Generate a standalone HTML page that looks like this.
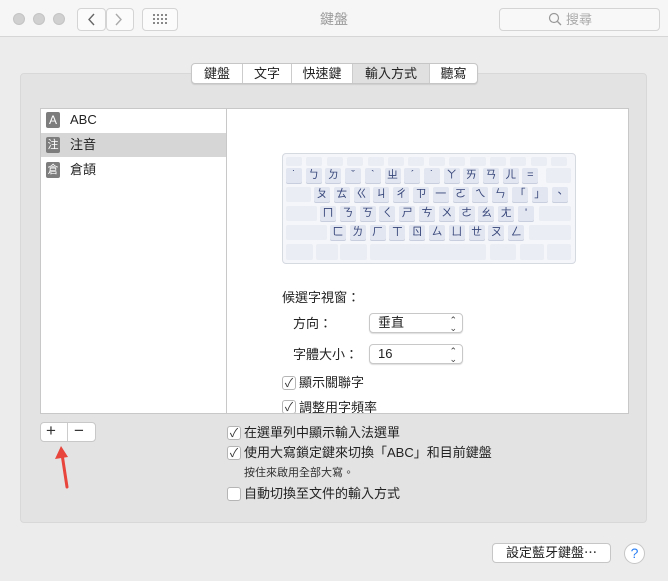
<!DOCTYPE html>
<html><head><meta charset="utf-8"><style>
*{margin:0;padding:0;box-sizing:border-box}
body{width:668px;height:581px;background:#ececec;font-family:"Liberation Sans","Noto Sans CJK TC",sans-serif;font-size:13px;line-height:16px;color:#222;position:relative;overflow:hidden}
.a{position:absolute}
.tb{left:0;top:0;width:668px;height:37px;background:#f6f6f6;border-bottom:1px solid #d6d6d6}
.dot{width:12px;height:12px;border-radius:50%;background:#d0d0d0;border:1px solid #c4c4c4;top:13px}
.btn{background:#fbfbfb;border:1px solid #d4d4d4;border-radius:4px}
.k{position:absolute;height:15px;background:#e2e6f0;border-radius:2px;box-shadow:0 1px 0 #c9cede;color:#36457a;font-size:11px;text-align:center;line-height:15px}
.b{position:absolute;height:15px;background:#eaedf3;border-radius:2px}
.cb{width:14px;height:14px;background:#fff;border:1px solid #b5b5b5;border-radius:3px;font-size:12px;line-height:12px;text-align:center;color:#333}
.pop{background:#fff;border:1px solid #c8c8c8;border-radius:4px;height:20px;width:94px;font-size:13px;line-height:18px;padding-left:8px;box-shadow:0 1px 1px #ddd}
.pop span{position:absolute;right:5px;font-size:9px;line-height:8px;top:2px;color:#444}
</style></head><body>
<div class="a tb"></div>
<div class="a dot" style="left:13px"></div><div class="a dot" style="left:33px"></div><div class="a dot" style="left:53px"></div>
<div class="a btn" style="left:77px;top:8px;width:29px;height:23px"></div>
<div class="a btn" style="left:106px;top:8px;width:28px;height:23px"></div>
<svg class="a" style="left:77px;top:8px" width="57" height="23"><path d="M17 6l-5 5.5 5 5.5" stroke="#666" stroke-width="1.4" fill="none"/><path d="M39 6l5 5.5-5 5.5" stroke="#aaa" stroke-width="1.4" fill="none"/></svg>
<div class="a btn" style="left:142px;top:8px;width:36px;height:23px"></div>
<svg class="a" style="left:153px;top:14px" width="15" height="11"><g fill="#888"><rect x="0" y="0" width="2" height="2"/><rect x="4" y="0" width="2" height="2"/><rect x="8" y="0" width="2" height="2"/><rect x="12" y="0" width="2" height="2"/><rect x="0" y="4" width="2" height="2"/><rect x="4" y="4" width="2" height="2"/><rect x="8" y="4" width="2" height="2"/><rect x="12" y="4" width="2" height="2"/><rect x="0" y="8" width="2" height="2"/><rect x="4" y="8" width="2" height="2"/><rect x="8" y="8" width="2" height="2"/><rect x="12" y="8" width="2" height="2"/></g></svg>
<div class="a" style="left:300px;top:11px;width:68px;text-align:center;color:#9a9a9a;font-size:14px">鍵盤</div>
<div class="a btn" style="left:499px;top:8px;width:161px;height:23px;background:#f8f8f8"></div>
<svg class="a" style="left:548px;top:12px" width="14" height="14"><circle cx="6" cy="6" r="4.5" stroke="#999" stroke-width="1.2" fill="none"/><path d="M9.5 9.5l3.5 3.5" stroke="#999" stroke-width="1.3"/></svg>
<div class="a" style="left:566px;top:12px;color:#aaa;font-size:13px">搜尋</div>

<div class="a" style="left:20px;top:73px;width:627px;height:450px;background:#e3e3e3;border:1px solid #d8d8d8;border-radius:4px"></div>
<div class="a" style="left:191px;top:63px;width:287px;height:21px;background:#fff;border:1px solid #c6c6c6;border-radius:4px;box-shadow:0 1px 1px #ccc;font-size:13px;line-height:19px">
<div class="a" style="left:0;width:50px;text-align:center">鍵盤</div>
<div class="a" style="left:50px;top:0;height:19px;width:49px;border-left:1px solid #ccc;text-align:center">文字</div>
<div class="a" style="left:99px;top:0;height:19px;width:61px;border-left:1px solid #ccc;text-align:center">快速鍵</div>
<div class="a" style="left:160px;top:0;height:19px;width:77px;border-left:1px solid #ccc;background:#e0e0e0;text-align:center">輸入方式</div>
<div class="a" style="left:237px;top:0;height:19px;width:48px;border-left:1px solid #ccc;text-align:center">聽寫</div>
</div>

<div class="a" style="left:40px;top:108px;width:589px;height:306px;background:#fff;border:1px solid #c8c8c8"></div>
<div class="a" style="left:226px;top:109px;width:1px;height:304px;background:#c8c8c8"></div>
<div class="a" style="left:41px;top:133px;width:185px;height:24px;background:#d6d6d6"></div>
<div class="a" style="left:46px;top:112px;width:14px;height:16px;background:#7d7d7d;border-radius:2px;color:#fff;font-size:12px;text-align:center;line-height:16px">A</div>
<div class="a" style="left:46px;top:137px;width:14px;height:16px;background:#7d7d7d;border-radius:2px;color:#fff;font-size:11px;text-align:center;line-height:16px">注</div>
<div class="a" style="left:46px;top:162px;width:14px;height:16px;background:#7d7d7d;border-radius:2px;color:#fff;font-size:11px;text-align:center;line-height:16px">倉</div>
<div class="a" style="left:70px;top:112px">ABC</div>
<div class="a" style="left:70px;top:137px">注音</div>
<div class="a" style="left:70px;top:162px">倉頡</div>

<div class="a" style="left:282px;top:153px;width:294px;height:111px;background:#f4f6fa;border:1px solid #d5d9e0;border-radius:4px"></div>
<div id="kb"></div>
<script>
var h='',i;
for(i=0;i<14;i++)h+='<div class="b" style="left:'+(286+i*20.4)+'px;top:157px;width:16px;height:9px"></div>';
var r1='˙ㄅㄉˇˋㄓˊ˙ㄚㄞㄢㄦ=';
for(i=0;i<13;i++)h+='<div class="k" style="left:'+(286+i*19.7)+'px;top:168px;width:16px">'+r1[i]+'</div>';
h+='<div class="b" style="left:546px;top:168px;width:25px"></div>';
h+='<div class="b" style="left:286px;top:187px;width:25px"></div>';
var r2=['ㄆ','ㄊ','ㄍ','ㄐ','ㄔ','ㄗ','一','ㄛ','ㄟ','ㄣ','「','」','、'];
for(i=0;i<13;i++)h+='<div class="k" style="left:'+(314+i*19.8)+'px;top:187px;width:16px">'+r2[i]+'</div>';
h+='<div class="b" style="left:286px;top:206px;width:31px"></div>';
var r3="ㄇㄋㄎㄑㄕㄘㄨㄜㄠㄤ'";
for(i=0;i<11;i++)h+='<div class="k" style="left:'+(320+i*19.8)+'px;top:206px;width:16px">'+r3[i]+'</div>';
h+='<div class="b" style="left:539px;top:206px;width:32px"></div>';
h+='<div class="b" style="left:286px;top:225px;width:41px"></div>';
var r4='ㄈㄌㄏㄒㄖㄙㄩㄝㄡㄥ';
for(i=0;i<10;i++)h+='<div class="k" style="left:'+(330+i*19.8)+'px;top:225px;width:16px">'+r4[i]+'</div>';
h+='<div class="b" style="left:529px;top:225px;width:42px"></div>';
[[286,27],[316,22],[340,27],[370,116],[490,26],[520,24],[547,24]].forEach(function(p){h+='<div class="b" style="left:'+p[0]+'px;top:244px;width:'+p[1]+'px;height:16px"></div>'});
document.getElementById('kb').innerHTML=h;
</script>

<div class="a" style="left:282px;top:290px">候選字視窗：</div>
<div class="a" style="left:293px;top:316px">方向：</div>
<div class="a pop" style="left:369px;top:313px">垂直<span>⌃<br>⌄</span></div>
<div class="a" style="left:293px;top:347px">字體大小：</div>
<div class="a pop" style="left:369px;top:344px">16<span>⌃<br>⌄</span></div>
<div class="a cb" style="left:282px;top:376px">✓</div><div class="a" style="left:299px;top:375px">顯示關聯字</div>
<div class="a" style="left:282px;top:400px;width:150px;height:13px;overflow:hidden"><div class="a cb" style="left:0;top:0">✓</div><div class="a" style="left:17px;top:0">調整用字頻率</div></div>

<div class="a btn" style="left:40px;top:422px;width:56px;height:20px;background:#fff;border-color:#c8c8c8"></div>
<div class="a" style="left:67px;top:423px;width:1px;height:18px;background:#ccc"></div>
<div class="a" style="left:46px;top:423px;font-size:17px;color:#333">+</div>
<div class="a" style="left:74px;top:423px;font-size:17px;color:#333">−</div>
<svg class="a" style="left:50px;top:440px" width="25" height="52"><path d="M17 47L12 14" stroke="#e8453c" stroke-width="3" stroke-linecap="round"/><path d="M11 6L5 19 18 17z" fill="#e8453c"/></svg>

<div class="a cb" style="left:227px;top:426px">✓</div><div class="a" style="left:244px;top:425px">在選單列中顯示輸入法選單</div>
<div class="a cb" style="left:227px;top:446px">✓</div><div class="a" style="left:244px;top:445px">使用大寫鎖定鍵來切換「ABC」和目前鍵盤</div>
<div class="a" style="left:244px;top:465px;font-size:11px;color:#333">按住來啟用全部大寫。</div>
<div class="a cb" style="left:227px;top:487px"></div><div class="a" style="left:244px;top:486px">自動切換至文件的輸入方式</div>

<div class="a btn" style="left:492px;top:543px;width:119px;height:20px;background:#fff;border-color:#c6c6c6;text-align:center;line-height:18px">設定藍牙鍵盤⋯</div>
<div class="a" style="left:624px;top:543px;width:21px;height:21px;border-radius:50%;background:#fff;border:1px solid #c6c6c6;color:#2a7ff5;text-align:center;line-height:19px;font-size:14px">?</div>
</body></html>
